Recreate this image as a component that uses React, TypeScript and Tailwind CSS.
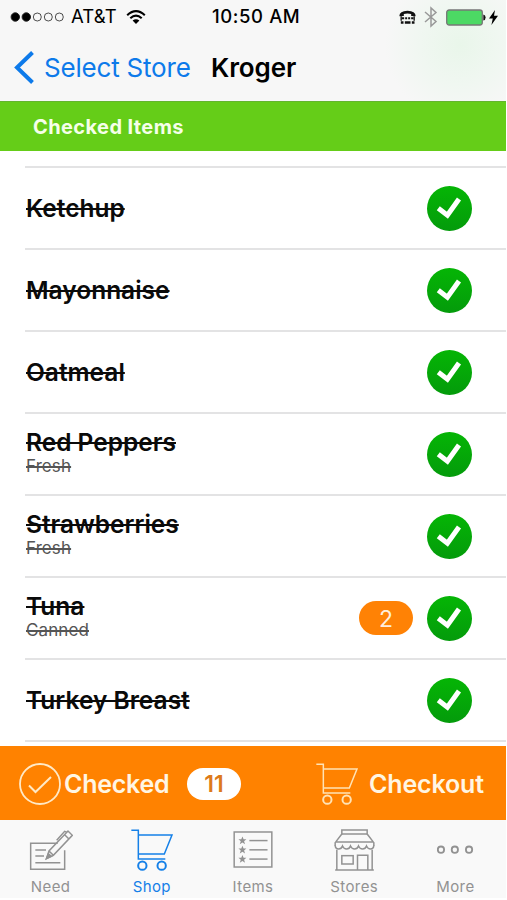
import React from 'react';

interface IconProps {
  className?: string;
}

interface Item {
  name: string;
  note?: string;
  quantity?: number;
}

const items: Item[] = [
  { name: 'Ketchup' },
  { name: 'Mayonnaise' },
  { name: 'Oatmeal' },
  { name: 'Red Peppers', note: 'Fresh' },
  { name: 'Strawberries', note: 'Fresh' },
  { name: 'Tuna', note: 'Canned', quantity: 2 },
  { name: 'Turkey Breast' },
];

const CartIcon: React.FC<IconProps> = ({ className }) => (
  <svg viewBox="0 0 126 126" fill="none" stroke="currentColor" strokeWidth="4.5" className={className}>
    <path d="M1 3.500H22V90H103M22 18H123L100 75H22" />
    <circle cx="34" cy="110" r="12.500" strokeWidth="6" />
    <circle cx="92" cy="110" r="12.500" strokeWidth="6" />
  </svg>
);

const NeedIcon: React.FC<IconProps> = ({ className }) => (
  <svg viewBox="0 0 132 126" fill="none" stroke="currentColor" strokeWidth="4.5" className={className}>
    <path d="M86 43H5V121H107V64" />
    <path d="M19 63H51M19 81H45M19 101H94" />
    <path d="M53 88L60 66L117 6L130 19L73 79L53 88ZM60 66L73 79M107 17L119 29" />
    <path d="M83 34L107 7L114 10" />
    <path d="M52 89L58 74L67 82Z" fill="currentColor" />
  </svg>
);

const STAR = 'M0 -12L3.500 -4H12L5 2L8 11L0 6L-8 11L-5 2L-12 -4H-3.500Z';

const ItemsIcon: React.FC<IconProps> = ({ className }) => (
  <svg viewBox="0 0 120 112" fill="none" stroke="currentColor" strokeWidth="4.5" className={className}>
    <rect x="3" y="3" width="114" height="106" />
    {[29, 57, 85].map((y) => (
      <g key={y}>
        <path d={STAR} transform={`translate(28 ${y})`} fill="currentColor" stroke="none" />
        <path d={`M49 ${y}H104`} />
      </g>
    ))}
  </svg>
);

const StoresIcon: React.FC<IconProps> = ({ className }) => (
  <svg viewBox="0 0 122 126" fill="none" stroke="currentColor" strokeWidth="4.5" className={className}>
    <path d="M23 15V3H99V15M23 15H99M23 15L3 41V51M99 15L119 41V51M3 39H119" />
    <path d="M3 49Q4 60 13 60Q22 60 25 51Q29 60 37 60Q46 60 49 51Q53 60 61 60Q70 60 73 51Q77 60 85 60Q94 60 97 51Q101 60 109 60Q118 60 119 49" />
    <path d="M8 62V123M114 62V123M3 123H119" />
    <rect x="23" y="80" width="34" height="25" />
    <path d="M70 123V79H101V123" />
  </svg>
);

const MoreIcon: React.FC<IconProps> = ({ className }) => (
  <svg viewBox="0 0 112 126" fill="none" stroke="currentColor" strokeWidth="5.5" className={className}>
    <circle cx="12" cy="62" r="9.500" />
    <circle cx="54" cy="62" r="9.500" />
    <circle cx="97" cy="62" r="9.500" />
  </svg>
);

const CheckedBadge: React.FC = () => (
  <svg viewBox="0 0 45 45" className="size-[45px] shrink-0">
    <defs>
      <linearGradient id="badge" x1="0" y1="0" x2="0" y2="1">
        <stop offset="0" stopColor="#05b505" />
        <stop offset="1" stopColor="#049b0b" />
      </linearGradient>
    </defs>
    <circle cx="22.500" cy="22.500" r="22.500" fill="url(#badge)" />
    <path d="M11.300 22.300L20.400 29.300L32 13" fill="none" stroke="#fff" strokeWidth="5" />
  </svg>
);

const StatusBar: React.FC = () => (
  <div className="flex h-[34px] items-center pl-[10px] text-[17.5px] text-black">
    <svg viewBox="0 0 56 12" className="h-3 w-14" stroke="#222">
      <circle cx="5.300" cy="6" r="4.200" fill="#000" />
      <circle cx="16.300" cy="6" r="4.200" fill="#000" />
      <circle cx="27.300" cy="6" r="4" fill="none" strokeWidth=".8" />
      <circle cx="38.300" cy="6" r="4" fill="none" strokeWidth=".8" />
      <circle cx="49.300" cy="6" r="4" fill="none" strokeWidth=".8" />
    </svg>
    <span className="ml-[5px] w-[55px] text-[18.5px] whitespace-nowrap tracking-[0.1px]">AT&amp;T</span>
    <svg viewBox="0 0 20 16" className="h-4 w-5" fill="none" stroke="#000" strokeWidth="2.100">
      <path d="M1.200 6.200Q10 -2 18.800 6.200M4.300 9.300Q10 4 15.700 9.300" />
      <path d="M10 15L6.600 11.600Q10 8.800 13.400 11.600Z" fill="#000" stroke="none" />
    </svg>
    <span className="ml-[66px] w-[187px] text-[18.5px] whitespace-nowrap font-medium tracking-[0.6px]">10:50 AM</span>
    <svg viewBox="0 0 50 42" className="h-[14px] w-[17px]" fill="#111">
      <path d="M1 19Q-1 3 25 2Q51 3 49 19L36 18V12Q25 9 14 12V18Z" />
      <path d="M8 22h7v6H8zM18 22h6v6h-6zM27 22h6v6h-6zM36 22h7v6h-7zM5 34h8v7H5zM17 34h17v7H17zM38 34h8v7h-8z" />
      <path d="M4 19h4v13H4zM43 19h4v13h-4z" />
    </svg>
    <svg viewBox="0 0 14 22" className="ml-[8px] h-[22px] w-[14px]" fill="none" stroke="#999" strokeWidth="1.500">
      <path d="M1 6L12 15.500L7 20V2L12 6.500L1 16" />
    </svg>
    <svg viewBox="0 0 40 17" className="ml-[8px] h-[17px] w-10">
      <rect x=".7" y="1" width="35.600" height="15" rx="2.500" fill="#4cd964" stroke="#777" strokeWidth="1.300" />
      <path d="M37.300 5.500Q39.600 6 39.600 8.500T37.300 11.500Z" fill="#111" />
    </svg>
    <svg viewBox="0 0 9 15" className="ml-[3px] h-[15px] w-[9px]">
      <path d="M6 0L0 8.600H3.800L2.400 15L9 5.800H5Z" fill="#000" />
    </svg>
  </div>
);

const NavBar: React.FC = () => (
  <div className="flex h-[67px] items-center pl-[14px] text-[26px]">
    <svg viewBox="0 0 20 33" className="h-[33px] w-5" fill="none" stroke="#0d7aea" strokeWidth="4">
      <path d="M18.500 1.500L3 16.500L18.500 31.500" />
    </svg>
    <span className="ml-[10px] w-[167px] whitespace-nowrap tracking-[-0.2px] text-[#0d7aea]">Select Store</span>
    <span className="whitespace-nowrap font-semibold tracking-[-0.1px] text-black">Kroger</span>
  </div>
);

const ItemRow: React.FC<{ item: Item }> = ({ item }) => (
  <li className="ml-[25px] flex h-[82px] items-center border-t-2 border-[#e3e3e4] pr-[34px] pl-px">
    <div className={`flex-1 whitespace-nowrap ${item.note ? 'pb-1' : ''}`}>
      <div className="text-[24.5px] leading-[28px] font-semibold text-[#0a0a0a] line-through decoration-2">
        {item.name}
      </div>
      {item.note && (
        <div className="text-[17px] leading-[20px] tracking-[0.1px] text-[#555] line-through decoration-2">
          {item.note}
        </div>
      )}
    </div>
    {item.quantity && (
      <span className="mr-[14px] flex h-[34px] w-[54px] items-center justify-center rounded-full bg-[#ff8205] pt-0.5 text-[23px] text-[#ffeedd]">
        {item.quantity}
      </span>
    )}
    <CheckedBadge />
  </li>
);

const ActionBar: React.FC = () => (
  <div className="flex h-[74px] items-center bg-[#ff8200] pt-px pl-[19px] text-[25px] font-semibold text-[#fff6e3]">
    <svg viewBox="0 0 42 42" className="size-[42px]" fill="none" stroke="#ffe9c6" strokeWidth="1.800">
      <circle cx="21" cy="21" r="20" />
      <path d="M10 22.500L16.500 29L32 14" strokeWidth="2" />
    </svg>
    <span className="ml-[3px] w-[123px] pt-0.5 whitespace-nowrap tracking-[-0.25px]">Checked</span>
    <span className="flex h-8 w-[54px] items-center justify-center rounded-full bg-white pt-px text-[23px] text-[#dd7a1a]">
      11
    </span>
    <CartIcon className="ml-[75px] size-[42px] text-[#ffe3b5]" />
    <span className="ml-[11px] pt-0.5 whitespace-nowrap tracking-[-0.15px]">Checkout</span>
  </div>
);

const tabs = [
  { label: 'Need', icon: <NeedIcon className="h-[42px] w-11" /> },
  { label: 'Shop', icon: <CartIcon className="size-[42px]" />, active: true },
  { label: 'Items', icon: <ItemsIcon className="h-[37px] w-10" /> },
  { label: 'Stores', icon: <StoresIcon className="h-[42px] w-[41px]" /> },
  { label: 'More', icon: <MoreIcon className="h-[42px] w-[37px]" /> },
];

const TabBar: React.FC = () => (
  <nav className="flex h-[78px] bg-[#f9f9f9] pt-[8px]">
    {tabs.map((tab) => (
      <div
        key={tab.label}
        className={`flex flex-1 flex-col items-center ${tab.active ? 'text-[#1580e8]' : 'text-[#929292]'}`}
      >
        <div className="flex h-[43px] items-center">{tab.icon}</div>
        <span className="mt-[7px] text-[15px] leading-[18px] tracking-[0.4px]">{tab.label}</span>
      </div>
    ))}
  </nav>
);

const App: React.FC = () => (
  <div className="h-[900px] w-[507px] overflow-hidden bg-white font-['Inter',sans-serif]">
    <div className="flex h-[898px] w-[506px] flex-col">
      <header className="h-[101px] bg-[#f7f7f7] bg-[radial-gradient(circle_at_460px_45px,#e9f6ea_0px,#f0f7f1_40px,#f7f7f7_75px)]">
        <StatusBar />
        <NavBar />
      </header>
      <div className="flex h-[50px] items-center border-t border-[#63b52d] bg-[#65cd18] pl-[33px] text-[20px] font-bold tracking-[0.4px] text-[#f5ffe9]">
        Checked Items
      </div>
      <ul className="h-[595px] overflow-hidden pt-[15px]">
        {items.map((item) => (
          <ItemRow key={item.name} item={item} />
        ))}
        <li className="ml-[25px] border-t-2 border-[#e3e3e4]" />
      </ul>
      <ActionBar />
      <TabBar />
    </div>
  </div>
);

export default App;
